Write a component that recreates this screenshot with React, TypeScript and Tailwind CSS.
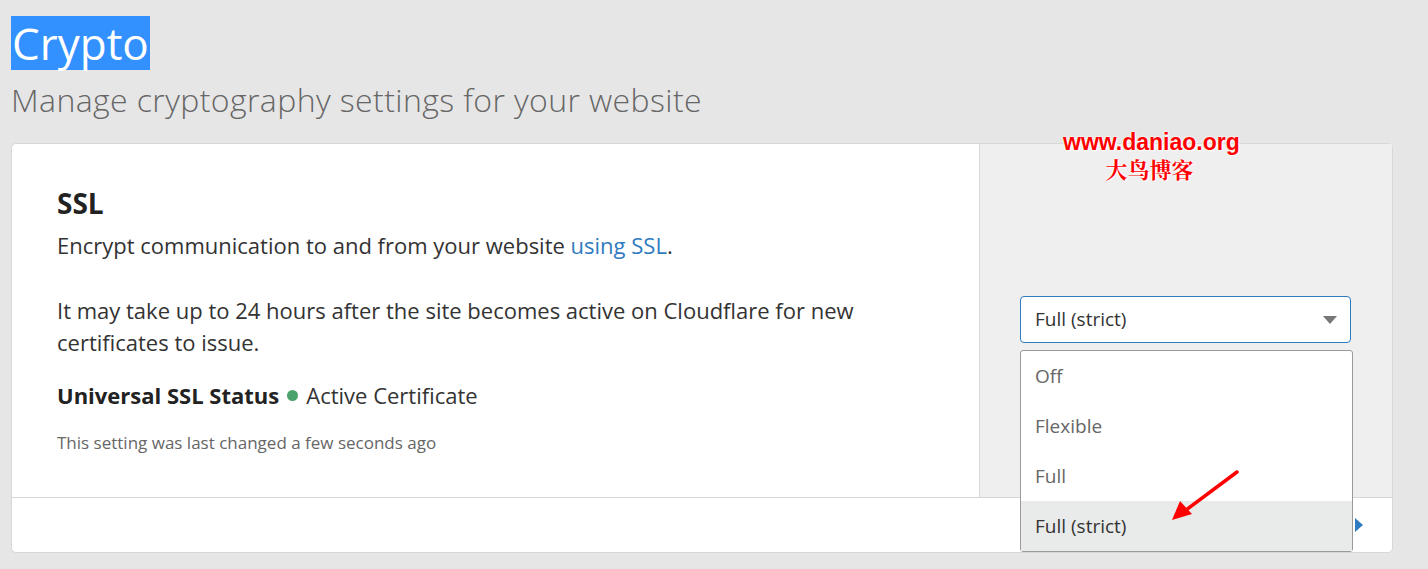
const options = ["Off", "Flexible", "Full", "Full (strict)"];

export default function App() {
  return (
    <div className="relative min-h-[569px] bg-[#e6e6e6] px-[11px] pt-4 font-['Open_Sans',sans-serif]">
      <h1 className="inline-block bg-[#3391ff] px-[1px] text-[44px] leading-[54px] font-normal text-white">
        Crypto
      </h1>
      <p className="mt-[10px] text-[32px] leading-[40px] font-light tracking-[0.4px] text-[#666]">
        Manage cryptography settings for your website
      </p>

      <div className="mt-[23px] mr-[24px] rounded-[5px] border border-[#d7d7d7] bg-white">
        <div className="flex h-[354px] border-b border-[#d7d7d7]">
          <div className="flex-1 pl-[45px] pt-[42px] text-[#333]">
            <h2 className="text-[28px] leading-[34px] font-bold text-[#222]">SSL</h2>
            <p className="mt-[9px] text-[22px] leading-[32px]">
              Encrypt communication to and from your website{" "}
              <a className="text-[#2f7bbf]">using SSL</a>.
            </p>
            <p className="mt-[33px] max-w-[840px] text-[22px] leading-[32px]">
              It may take up to 24 hours after the site becomes active on Cloudflare for new
              certificates to issue.
            </p>
            <p className="mt-[21px] flex items-center text-[22px] leading-[32px]">
              <span className="font-bold text-[#222]">Universal SSL Status</span>
              <span className="mx-[8px] inline-block h-[11px] w-[11px] rounded-full bg-[#4aa36b]" />
              <span>Active Certificate</span>
            </p>
            <p className="mt-[21px] text-[17px] leading-[22px] text-[#666]">
              This setting was last changed a few seconds ago
            </p>
          </div>

          <div className="w-[413px] border-l border-[#d7d7d7] bg-[#efefef] pl-[40px] pt-[152px]">
            <div className="relative w-[331px]">
              <div className="flex h-[47px] items-center justify-between rounded-[4px] border border-[#2f7bbf] bg-white pl-[14px] pr-[13px]">
                <span className="text-[19px] text-[#333]">Full (strict)</span>
                <svg width="14" height="8" viewBox="0 0 14 8">
                  <path d="M0 0h14L7 8z" fill="#777" />
                </svg>
              </div>
              <ul className="absolute left-0 top-[54px] z-10 w-[333px] rounded-[3px] border border-[#9a9a9a] bg-white">
                {options.map((opt, i) => (
                  <li
                    key={opt}
                    className={
                      i === 3
                        ? "flex h-[50px] items-center bg-[#e9eaea] pl-[14px] text-[19px] text-[#333]"
                        : "flex h-[50px] items-center pl-[14px] text-[19px] text-[#666]"
                    }
                  >
                    {opt}
                  </li>
                ))}
              </ul>
            </div>
          </div>
        </div>

        <div className="flex h-[54px] items-center justify-end pr-[29px]">
          <svg width="8" height="14" viewBox="0 0 8 14">
            <path d="M0 0l8 7-8 7z" fill="#2f7bbf" />
          </svg>
        </div>
      </div>

      <div className="absolute left-[1063px] top-[130px] flex flex-col items-center [text-shadow:0_0_2px_#fff,0_0_2px_#fff,1px_1px_2px_#fff]">
        <span className="font-['Liberation_Sans',sans-serif] text-[23px] leading-[24px] font-bold text-[#ff0000]">
          www.daniao.org
        </span>
        <span className="mt-[3px] -ml-[4px] font-['Noto_Serif_CJK_SC','Noto_Sans_CJK_SC',serif] text-[22px] leading-[24px] font-bold text-[#ff0000]">
          大鸟博客
        </span>
      </div>

      <svg className="absolute left-[1168px] top-[468px] z-20" width="74" height="56" viewBox="0 0 74 56">
        <path d="M69 4L14 45" stroke="#ff0000" strokeWidth="3.5" strokeLinecap="round" />
        <path d="M4 52L12 33L24 46Z" fill="#ff0000" />
      </svg>
    </div>
  );
}
